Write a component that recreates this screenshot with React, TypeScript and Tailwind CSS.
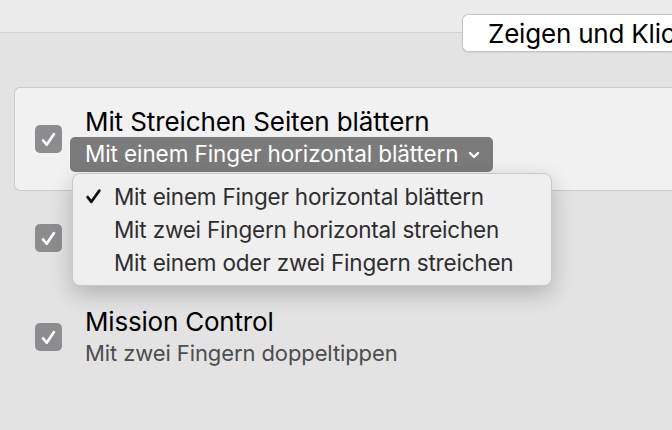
import { memo } from 'react';

const font = { fontFamily: 'Inter, "Liberation Sans", sans-serif' };

const CheckBox = memo(() => (
  <div className="flex h-[28px] w-[27px] shrink-0 items-center justify-center rounded-[5px] bg-[#8d8d8f]">
    <svg viewBox="0 0 20 20" className="h-[21px] w-[21px]" fill="none">
      <path d="M4.8 10.8 8.3 15 15.2 4.8" stroke="#fff" strokeWidth="2.5" strokeLinecap="round" strokeLinejoin="round" />
    </svg>
  </div>
));
CheckBox.displayName = 'CheckBox';

const options = [
  'Mit einem Finger horizontal blättern',
  'Mit zwei Fingern horizontal streichen',
  'Mit einem oder zwei Fingern streichen',
];

export default function App() {
  return (
    <div style={font} className="relative h-[430px] w-[672px] overflow-hidden bg-[#e3e3e3] antialiased">
      <div className="h-[33px] border-b border-[#d3d3d3] bg-[#ececec]" />
      <div className="-mt-[19px] flex justify-end">
        <div className="flex h-[38px] w-[210px] items-center overflow-hidden rounded-l-[6px] border border-r-0 border-[#c4c4c4] bg-white pl-[25px] text-[26px] tracking-[-0.2px] text-black shadow-[0_1px_1px_rgba(0,0,0,0.08)] whitespace-nowrap">
          Zeigen und Klicken
        </div>
      </div>

      <div className="ml-[14px] mt-[35px] flex h-[104px] w-[680px] items-center rounded-l-[6px] border border-r-0 border-[#cbcbcb] bg-[#f1f1f1] pl-[20px]">
        <CheckBox />
        <div className="ml-[8px] flex flex-col">
          <div className="pl-[15px] text-[26px] leading-[30px] tracking-[-0.1px] text-black">Mit Streichen Seiten blättern</div>
          <div className="flex h-[35px] items-center gap-[9px] rounded-[5px] bg-[#7b7b7b] pl-[15px] pr-[13px] text-[22.5px] tracking-[-0.1px] text-white">
            Mit einem Finger horizontal blättern
            <svg viewBox="0 0 12 12" className="mt-[2px] h-[12px] w-[12px]" fill="none">
              <path d="M2 4 6 8 10 4" stroke="#fff" strokeWidth="2.4" strokeLinecap="round" strokeLinejoin="round" />
            </svg>
          </div>
        </div>
      </div>

      <div className="flex flex-col pl-[35px]">
        <div className="mt-[33px]">
          <CheckBox />
        </div>
        <div className="mt-[54px] flex items-center gap-[23px]">
          <CheckBox />
          <div className="flex flex-col">
            <div className="text-[26px] leading-[32px] tracking-[-0.2px] text-black">Mission Control</div>
            <div className="text-[22px] leading-[30px] tracking-[-0.1px] text-[#4d4d4d]">Mit zwei Fingern doppeltippen</div>
          </div>
        </div>
      </div>

      <div className="absolute left-[72px] top-[173px] flex w-[480px] flex-col rounded-[8px] border border-[#c9c9c9] bg-[#efefef] py-[6px] shadow-[0_8px_22px_rgba(0,0,0,0.22)]">
        {options.map((label, i) => (
          <div key={label} className="flex h-[33px] items-center text-[22.5px] tracking-[-0.2px] text-[#2e2e2e]">
            <div className="flex w-[41px] justify-end pr-[12px]">
              {i === 0 && (
                <svg viewBox="0 0 16 16" className="h-[17px] w-[17px]" fill="none">
                  <path d="M2.5 8.5 6 13 13.5 2.5" stroke="#111" strokeWidth="2.6" strokeLinecap="round" strokeLinejoin="round" />
                </svg>
              )}
            </div>
            {label}
          </div>
        ))}
      </div>
    </div>
  );
}
